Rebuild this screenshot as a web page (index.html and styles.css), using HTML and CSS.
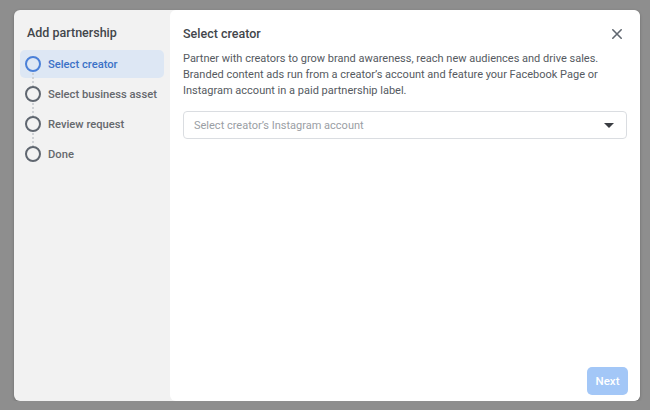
FILE: index.html
```html
<!DOCTYPE html>
<html lang="en">
<head>
    <meta charset="UTF-8">
    <title>Add partnership</title>
    <link rel="stylesheet" href="styles.css">
</head>
<body>
    <div class="modal">
        <div class="sidebar">
            <div class="sidebar-title">Add partnership</div>
            <div class="steps">
                <div class="step active"><span class="dot"></span>Select creator</div>
                <div class="step"><span class="dot"></span>Select business asset</div>
                <div class="step"><span class="dot"></span>Review request</div>
                <div class="step last"><span class="dot"></span>Done</div>
            </div>
        </div>
        <div class="main">
            <div class="main-header">
                <div class="main-title">Select creator</div>
                <svg class="close" width="12" height="12" viewBox="0 0 12 12">
                    <path d="M1.8 1.8 L10.2 10.2 M10.2 1.8 L1.8 10.2" stroke="#606770" stroke-width="1.6" stroke-linecap="round"/>
                </svg>
            </div>
            <p class="intro">Partner with creators to grow brand awareness, reach new audiences and drive sales. Branded content ads run from a creator’s account and feature your Facebook Page or Instagram account in a paid partnership label.</p>
            <div class="select">
                <span>Select creator’s Instagram account</span>
                <span class="caret"></span>
            </div>
            <div class="footer">
                <button class="next">Next</button>
            </div>
        </div>
    </div>
</body>
</html>
```

FILE: styles.css
```css
body {
    margin: 0;
    background: #8e8e8e;
    font-family: Roboto, "Liberation Sans", Arial, sans-serif;
    padding: 10px 10px 0 14px;
}
.modal {
    width: 626px;
    height: 391px;
    display: flex;
    background: #f2f2f2;
    border-radius: 6px;
    overflow: hidden;
    box-shadow: 0 1px 3px rgba(0, 0, 0, 0.25);
}
.sidebar {
    width: 156px;
    padding: 0 6px;
    box-sizing: border-box;
}
.sidebar-title {
    font-size: 12.5px;
    font-weight: 500;
    color: #43464b;
    padding: 15px 0 0 7px;
    height: 25px;
}
.steps {
    display: flex;
    flex-direction: column;
    gap: 2px;
}
.step {
    position: relative;
    height: 28px;
    display: flex;
    align-items: center;
    gap: 7px;
    padding-left: 5px;
    font-size: 11.2px;
    font-weight: 500;
    white-space: nowrap;
    color: #65686d;
    border-radius: 5px;
}
.step.active {
    background: #dde7f4;
    color: #3b72c7;
}
.dot {
    width: 12px;
    height: 12px;
    border: 2px solid #606770;
    border-radius: 50%;
    flex-shrink: 0;
}
.step.active .dot {
    border-color: #4a80d8;
}
.step::after {
    content: "";
    position: absolute;
    left: 12px;
    top: 23px;
    height: 14px;
    border-left: 2px dotted #cfd2d6;
}
.step.last::after {
    display: none;
}
.main {
    flex: 1;
    background: #fff;
    border-radius: 6px;
    padding: 0 13px 0 13px;
    display: flex;
    flex-direction: column;
}
.main-header {
    display: flex;
    justify-content: space-between;
    align-items: center;
    padding-top: 15px;
    height: 17px;
}
.main-title {
    font-size: 12.5px;
    font-weight: 500;
    color: #43464b;
}
.close {
    margin-right: 4px;
}
.intro {
    margin: 9px 0 0;
    font-size: 11px;
    line-height: 16px;
    color: #555a61;
}
.select {
    margin-top: 12px;
    height: 28px;
    border: 1px solid #dadde1;
    border-radius: 4px;
    box-sizing: border-box;
    display: flex;
    align-items: center;
    justify-content: space-between;
    padding: 0 12px 0 10px;
    font-size: 11px;
    color: #9a9ea4;
}
.caret {
    width: 0;
    height: 0;
    border-left: 5px solid transparent;
    border-right: 5px solid transparent;
    border-top: 5px solid #3a3d42;
}
.footer {
    margin-top: auto;
    display: flex;
    justify-content: flex-end;
    padding-bottom: 6px;
}
.next {
    width: 41px;
    height: 28px;
    margin-right: -1px;
    border: none;
    border-radius: 5px;
    background: #a3c7f7;
    color: #fff;
    font-family: inherit;
    font-size: 11.5px;
    font-weight: 500;
}
```
